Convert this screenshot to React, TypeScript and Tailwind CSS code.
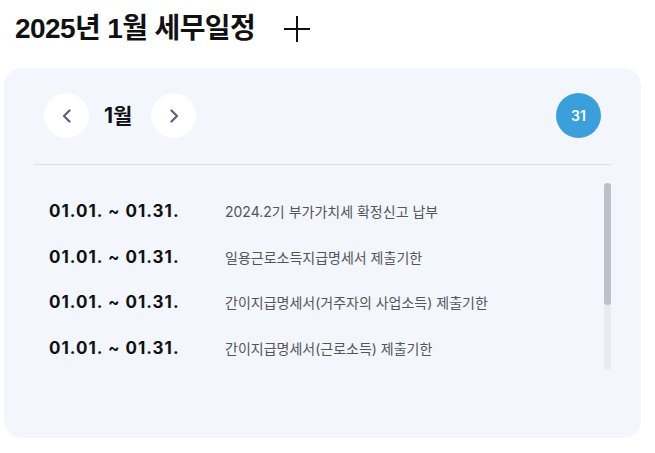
import React from "react";

const rows = [
  "2024.2기 부가가치세 확정신고 납부",
  "일용근로소득지급명세서 제출기한",
  "간이지급명세서(거주자의 사업소득) 제출기한",
  "간이지급명세서(근로소득) 제출기한",
];

export default function App() {
  return (
    <div className="w-[655px] h-[453px] bg-white" style={{ fontFamily: '"Inter", "Noto Sans CJK KR", sans-serif' }}>
      <div className="flex items-center h-[57px] pl-[15px]">
        <h1 className="text-[28px] font-bold text-[#111] tracking-[-0.6px]" style={{ fontFamily: '"Liberation Sans", "Noto Sans CJK KR", sans-serif' }}>
          2025년 1월 세무일정
        </h1>
        <svg width="26" height="26" viewBox="0 0 26 26" className="ml-[29px]">
          <path d="M13 0V26M0 13H26" stroke="#111" strokeWidth="2" />
        </svg>
      </div>
      <div className="ml-[4px] mt-[11px] w-[637px] h-[370px] rounded-[18px] bg-[#f3f6fd] px-[30px] pt-[25px]">
        <div className="flex items-center justify-between px-[10px] pb-[26px] border-b border-[#dcdfe5]">
          <div className="flex items-center">
            <button className="w-[45px] h-[45px] rounded-full bg-white flex items-center justify-center">
              <svg width="14" height="14" viewBox="0 0 14 14"><path d="M9.5 1.5L4 7L9.5 12.5" fill="none" stroke="#5c6070" strokeWidth="2.2" strokeLinecap="round" strokeLinejoin="round" /></svg>
            </button>
            <span className="ml-[15px] mr-[19px] text-[21px] font-bold text-[#111]">1월</span>
            <button className="w-[45px] h-[45px] rounded-full bg-white flex items-center justify-center">
              <svg width="14" height="14" viewBox="0 0 14 14"><path d="M4.5 1.5L10 7L4.5 12.5" fill="none" stroke="#5c6070" strokeWidth="2.2" strokeLinecap="round" strokeLinejoin="round" /></svg>
            </button>
          </div>
          <div className="w-[45px] h-[45px] rounded-full bg-[#3b9fdc] flex items-center justify-center text-white text-[14px] font-semibold">31</div>
        </div>
        <div className="flex mt-[18px]">
          <div className="flex-1 pl-[15px] pt-[6px]">
            {rows.map((r) => (
              <div key={r} className="flex items-center h-[45.5px]">
                <span className="w-[176px] text-[17px] font-bold text-[#111] tracking-[1px]">01.01. ~ 01.31.</span>
                <span className="text-[14px] text-[#555]">{r}</span>
              </div>
            ))}
          </div>
          <div className="w-[7px] h-[187px] rounded-full bg-[#e8ebf2] flex flex-col">
            <div className="h-[122px] rounded-full bg-[#bcc0c8]" />
          </div>
        </div>
      </div>
    </div>
  );
}
